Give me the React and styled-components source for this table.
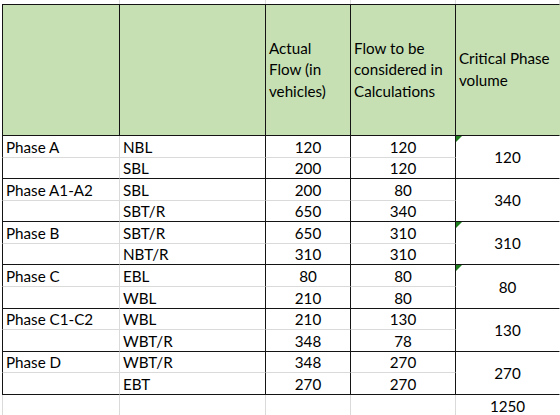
import React from "react"
import styled, { createGlobalStyle, css } from "styled-components"

const GlobalStyle = createGlobalStyle`
  html, body {
    margin: 0;
    padding: 0;
    background: #fff;
  }
  body {
    font-family: Lato, "Open Sans", sans-serif;
    color: #000;
  }
`

const GRID = "#dadada"
const LINE = "#141414"
const HEAD = "#c6e0b4"

const lineColor = kind => (kind === "dark" ? LINE : kind === "light" ? GRID : "transparent")

const Sheet = styled.div`
  display: grid;
  grid-template-columns: 118px 146px 85px 105px 1fr;
  grid-template-rows: 4px 132px repeat(12, 21.58px) 22px;
  width: 560px;
  height: 415px;
  padding-left: 2px;
  box-sizing: border-box;
  overflow: hidden;
  font-size: 15.2px;
`

// the row of the sheet above the table, only its gridlines show
const Gap = styled.div`
  border-right: 1px solid ${GRID};
`

const Head = styled.div`
  display: flex;
  align-items: center;
  padding: 0 3px;
  background: ${HEAD};
  border-top: 1px solid ${LINE};
  border-bottom: 1px solid ${LINE};
  border-right: 1px solid ${p => (p.$last ? "transparent" : LINE)};
  border-left: ${p => (p.$first ? `1px solid ${LINE}` : "none")};
  line-height: 21.6px;
`

const Cell = styled.div`
  position: relative;
  display: flex;
  align-items: flex-end;
  justify-content: ${p => (p.$center ? "center" : "flex-start")};
  padding: 0 3px 1px;
  line-height: 18px;
  white-space: nowrap;
  border-right: 1px solid ${p => lineColor(p.$right)};
  border-bottom: 1px solid ${p => lineColor(p.$bottom)};
  ${p =>
    p.$first &&
    css`
      border-left: 1px solid ${lineColor(p.$first)};
    `}
`

const Critical = styled(Cell)`
  grid-row: span 2;
  align-items: center;
  padding-bottom: 0;
`

// excel's little "number stored oddly" marker
const Flag = styled.span`
  position: absolute;
  top: 0;
  left: 0;
  width: 0;
  height: 0;
  border-top: 6px solid #1e7e1e;
  border-right: 6px solid transparent;
`

const phases = [
  { name: "Phase A", rows: [["NBL", 120, 120], ["SBL", 200, 120]], critical: 120, flag: true },
  { name: "Phase A1-A2", rows: [["SBL", 200, 80], ["SBT/R", 650, 340]], critical: 340 },
  { name: "Phase B", rows: [["SBT/R", 650, 310], ["NBT/R", 310, 310]], critical: 310, flag: true },
  { name: "Phase C", rows: [["EBL", 80, 80], ["WBL", 210, 80]], critical: 80, flag: true },
  { name: "Phase C1-C2", rows: [["WBL", 210, 130], ["WBT/R", 348, 78]], critical: 130 },
  { name: "Phase D", rows: [["WBT/R", 348, 270], ["EBT", 270, 270]], critical: 270 },
]

export default function App() {
  return (
    <>
      <GlobalStyle />
      <Sheet>
        <Gap />
        <Gap />
        <Gap />
        <Gap />
        <Gap />

        <Head $first />
        <Head />
        <Head>
          <span>
            Actual
            <br />
            Flow (in
            <br />
            vehicles)
          </span>
        </Head>
        <Head>
          <span>
            Flow to be
            <br />
            considered in
            <br />
            Calculations
          </span>
        </Head>
        <Head $last>
          <span>
            Critical Phase
            <br />
            volume
          </span>
        </Head>

        {phases.map(phase =>
          phase.rows.map(([move, actual, used], i) => {
            const bottom = i === 0 ? "light" : "dark"
            return (
              <React.Fragment key={phase.name + i}>
                <Cell $first="dark" $right="light" $bottom={bottom}>
                  {i === 0 ? phase.name : ""}
                </Cell>
                <Cell $right="dark" $bottom={bottom}>
                  {move}
                </Cell>
                <Cell $center $right="dark" $bottom={bottom}>
                  {actual}
                </Cell>
                <Cell $center $right="dark" $bottom={bottom}>
                  {used}
                </Cell>
                {i === 0 && (
                  <Critical $center $right="none" $bottom="dark">
                    {phase.flag && <Flag />}
                    {phase.critical}
                  </Critical>
                )}
              </React.Fragment>
            )
          })
        )}

        <Cell $first="light" $right="light" $bottom="none" />
        <Cell $right="light" $bottom="none" />
        <Cell $right="light" $bottom="none" />
        <Cell $right="light" $bottom="none" />
        <Cell $center $right="none" $bottom="none">
          1250
        </Cell>
      </Sheet>
    </>
  )
}
